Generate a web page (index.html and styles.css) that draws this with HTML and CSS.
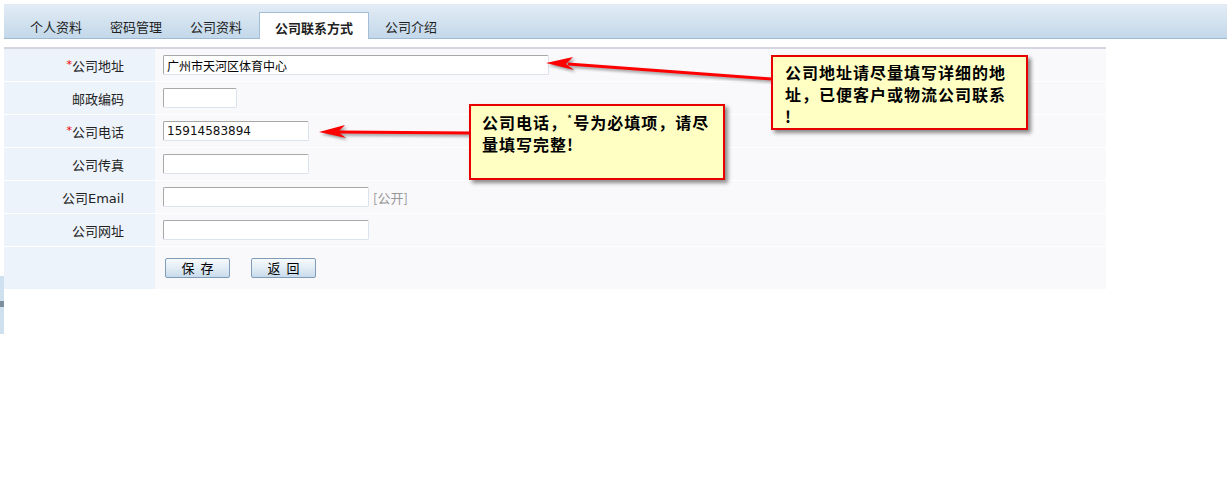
FILE: index.html
```html
<!DOCTYPE html>
<html lang="zh-CN">
  <head>
    <meta charset="UTF-8" />
    <title>公司联系方式</title>
    <link rel="stylesheet" href="styles.css">
  </head>
  <body>
    <div class="page">
      <div class="tabs">
        <a class="tab">个人资料</a>
        <a class="tab">密码管理</a>
        <a class="tab">公司资料</a>
        <a class="tab active">公司联系方式</a>
        <a class="tab">公司介绍</a>
      </div>

      <table class="form">
        <tr>
          <th><span class="req">*</span>公司地址</th>
          <td><input class="txt w-addr" type="text" value="广州市天河区体育中心"></td>
        </tr>
        <tr>
          <th>邮政编码</th>
          <td><input class="txt w-zip" type="text"></td>
        </tr>
        <tr>
          <th><span class="req">*</span>公司电话</th>
          <td><input class="txt w-tel num" type="text" value="15914583894"></td>
        </tr>
        <tr>
          <th>公司传真</th>
          <td><input class="txt w-tel" type="text"></td>
        </tr>
        <tr>
          <th>公司Email</th>
          <td><input class="txt w-mail" type="text"><span class="note">[公开]</span></td>
        </tr>
        <tr>
          <th>公司网址</th>
          <td><input class="txt w-mail" type="text"></td>
        </tr>
        <tr class="last">
          <th></th>
          <td>
            <div class="btns">
              <button class="btn">保 存</button>
              <button class="btn">返 回</button>
            </div>
          </td>
        </tr>
      </table>

      <div class="side-strip"></div>

      <!-- tips -->
      <svg class="arrows" width="1227" height="496">
        <g class="arrow">
          <line x1="568" y1="64" x2="772" y2="79" />
          <polygon points="546,63 573,57 566,64 574,70" />
        </g>
        <g class="arrow">
          <line x1="338" y1="132" x2="470" y2="133" />
          <polygon points="319,132 345,125 338,132 346,138" />
        </g>
      </svg>

      <div class="callout callout-addr">
        公司地址请尽量填写详细的地<br>
        址，已便客户或物流公司联系<br>
        !
      </div>
      <div class="callout callout-tel">
        公司电话，<span class="sup">*</span>号为必填项，请尽<br>
        量填写完整!
      </div>
    </div>
  </body>
</html>
```

FILE: styles.css
```css
body {
  margin: 0;
  background: #ffffff;
  color: #222222;
  font-family: "DejaVu Sans", "Noto Sans CJK SC", sans-serif;
  font-size: 13px;
}

.page {
  position: relative;
  padding: 4px 0 0 4px;
  height: 492px;
}

/* tab bar */
.tabs {
  display: flex;
  align-items: flex-end;
  height: 34px;
  padding-left: 12px;
  background: linear-gradient(#e3ecf5, #c3d8ea);
  border-bottom: 1px solid #9fbad3;
}

.tab {
  padding: 0 14px;
  line-height: 22px;
  font-family: "Noto Sans CJK SC", sans-serif;
  color: #1e1e1e;
  cursor: pointer;
}

.tab.active {
  margin: 0 2px -1px 3px;
  padding: 4px 15px 0;
  background: #ffffff;
  border: 1px solid #a3bfd8;
  border-bottom: none;
  font-weight: bold;
  color: #222222;
}

/* form table */
.form {
  width: 1102px;
  margin-top: 8px;
  border-collapse: separate;
  border-spacing: 0;
  border-top: 2px solid #d3d6de;
}

.form th,
.form td {
  height: 32px;
  padding: 0;
  border-bottom: 1px solid #ffffff;
}

.form th {
  width: 120px;
  padding-right: 31px;
  background: #edf3fb;
  text-align: right;
  font-weight: normal;
  color: #222222;
}

.form td {
  padding-left: 8px;
  background: #f9f9fb;
}

.form .last th,
.form .last td {
  height: 42px;
  border-bottom: none;
}

.req {
  color: #ee0000;
  font-size: 11px;
  vertical-align: 3px;
}

.txt {
  box-sizing: border-box;
  height: 20px;
  padding: 0 3px;
  border: 1px solid;
  border-color: #a8a8a8 #dde3ec #dde3ec #a8a8a8;
  border-radius: 2px;
  background: #ffffff;
  font-family: "Noto Sans CJK SC", sans-serif;
  font-size: 12px;
  color: #000000;
  vertical-align: middle;
}

.txt.num {
  font-family: "DejaVu Sans", sans-serif;
  color: #111111;
}

.w-addr { width: 386px; }
.w-zip { width: 74px; }
.w-tel { width: 146px; }
.w-mail { width: 206px; }

.note {
  margin-left: 4px;
  color: #999999;
  font-family: "Noto Sans CJK SC", sans-serif;
  vertical-align: middle;
}

.btns {
  display: flex;
  gap: 21px;
  padding-left: 2px;
}

.btn {
  width: 65px;
  height: 20px;
  padding: 0;
  border: 1px solid #7f9db9;
  border-radius: 2px;
  background: linear-gradient(#f6f9fc, #e4eef6 45%, #c8dbeb);
  font-family: "Noto Sans CJK SC", sans-serif;
  font-size: 13px;
  line-height: 18px;
  word-spacing: 3px;
  color: #000000;
  cursor: pointer;
}

.side-strip {
  position: absolute;
  left: 0;
  top: 276px;
  width: 4px;
  height: 58px;
  background: linear-gradient(#cfe0ee 0 25px, #7d8e9e 25px 31px, #cfe0ee 31px);
}

/* tips */
.arrows {
  position: absolute;
  left: 0;
  top: 0;
  pointer-events: none;
}

.arrow {
  filter: drop-shadow(2px 2px 1.5px rgba(0, 0, 0, 0.4));
}

.arrow line {
  stroke: #ff0000;
  stroke-width: 3;
}

.arrow polygon {
  fill: #ff0000;
}

.callout {
  position: absolute;
  box-sizing: border-box;
  background: #ffffc4;
  border: 2px solid #e80000;
  box-shadow: 3px 3px 4px rgba(0, 0, 0, 0.45);
  font-family: "Noto Sans CJK SC", sans-serif;
  font-size: 16px;
  font-weight: bold;
  line-height: 22px;
  letter-spacing: 1px;
  color: #000000;
  white-space: nowrap;
}

.callout-addr {
  left: 771px;
  top: 55px;
  width: 257px;
  height: 75px;
  padding: 4px 0 0 12px;
}

.callout-tel {
  left: 469px;
  top: 104px;
  width: 256px;
  height: 76px;
  padding: 5px 0 0 11px;
}

.sup {
  font-size: 11px;
  font-weight: normal;
  vertical-align: top;
  line-height: 14px;
}
```
